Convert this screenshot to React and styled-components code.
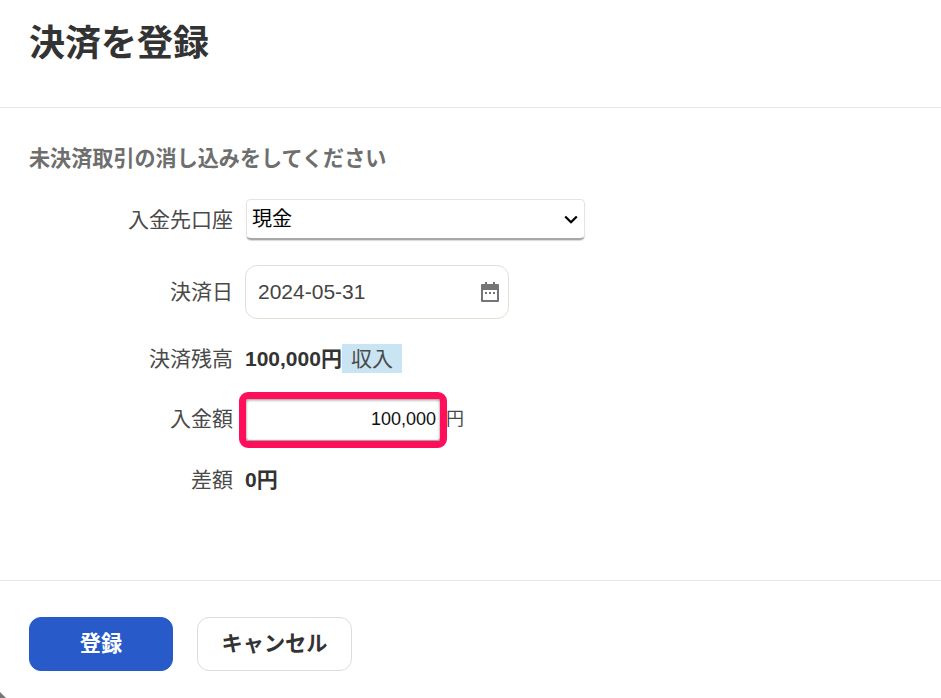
import React from 'react';
import styled, { createGlobalStyle } from 'styled-components';

const GlobalStyle = createGlobalStyle`
  html, body {
    margin: 0;
    padding: 0;
    background: #fff;
  }
  body {
    font-family: "Liberation Sans", Arial, "Noto Sans CJK JP", sans-serif;
    color: #333;
  }
`;

const Modal = styled.div`
  position: relative;
  width: 941px;
  height: 698px;
  background: #fff;
  overflow: hidden;
`;

const Header = styled.header`
  height: 108px;
  box-sizing: border-box;
  border-bottom: 1px solid #e6e6e6;
  padding: 21px 29px 0;
`;

const Title = styled.h1`
  margin: 0;
  font-size: 36px;
  line-height: 46px;
  font-weight: 700;
  color: #333;
`;

const Body = styled.div`
  height: 472px;
  box-sizing: border-box;
  padding: 39px 29px 0;
`;

const Lead = styled.p`
  margin: 0 0 28px;
  font-size: 21.1px;
  line-height: 24px;
  font-weight: 700;
  color: #6e6e6e;
`;

const Form = styled.div`
  display: flex;
  flex-direction: column;
`;

const Row = styled.div`
  display: flex;
  align-items: center;
  height: ${props => props.$height}px;
  margin-bottom: ${props => props.$gap}px;
`;

const Label = styled.label`
  width: 204px;
  flex: none;
  margin-right: 12px;
  padding-bottom: ${props => props.$lift || 4}px;
  text-align: right;
  font-size: 21px;
  color: #4a4a4a;
`;

const SelectBox = styled.div`
  width: 339px;
  height: 41px;
  margin-left: 1px;
  box-sizing: border-box;
  display: flex;
  align-items: center;
  justify-content: space-between;
  padding: 0 6px 0 5px;
  background: #fff;
  border: 1px solid #e4e4e4;
  border-bottom: 2px solid #a8a8a8;
  border-radius: 5px;
  box-shadow: 0 1px 1px rgba(0, 0, 0, 0.15);
  font-size: 20px;
  color: #000;
`;

const SelectValue = styled.span`
  padding-bottom: 4px;
`;

const DateBox = styled.div`
  width: 264px;
  height: 54px;
  box-sizing: border-box;
  display: flex;
  align-items: center;
  justify-content: space-between;
  padding: 0 8px 0 12px;
  border: 1px solid #e3dfd5;
  border-radius: 12px;
  font-size: 21px;
  color: #444;
`;

const Amount = styled.strong`
  padding-bottom: 4px;
  font-size: 21px;
  font-weight: 700;
  color: #333;
`;

const Tag = styled.span`
  display: inline-block;
  width: 60px;
  height: 29px;
  box-sizing: border-box;
  padding-left: 9px;
  background: #c9e4f2;
  font-size: 21px;
  line-height: 29px;
  color: #4a4a4a;
`;

const Highlight = styled.div`
  width: 208px;
  height: 56px;
  margin-left: -6px;
  box-sizing: border-box;
  border: 7px solid #ff0f5b;
  border-radius: 9px;
  background: #fff;
`;

const AmountInput = styled.div`
  height: 100%;
  box-sizing: border-box;
  padding-right: 4px;
  border-radius: 3px;
  box-shadow: inset 0 1px 3px rgba(0, 0, 0, 0.45), inset 0 -1px 1px rgba(0, 0, 0, 0.35);
  text-align: right;
  font-size: 18px;
  line-height: 40px;
  color: #111;
`;

const Unit = styled.span`
  margin-left: -1px;
  padding-bottom: 6px;
  font-size: 18px;
  color: #4a4a4a;
`;

const Footer = styled.footer`
  display: flex;
  gap: 24px;
  border-top: 1px solid #e6e6e6;
  padding: 36px 29px 0;
`;

const Button = styled.button`
  width: ${props => (props.$primary ? 144 : 155)}px;
  height: 54px;
  box-sizing: border-box;
  padding: 0 0 5px;
  border: 1px solid ${props => (props.$primary ? '#285bc9' : '#dcdcdc')};
  border-radius: 12px;
  background: ${props => (props.$primary ? '#285bc9' : '#fff')};
  color: ${props => (props.$primary ? '#fff' : '#333')};
  font-family: inherit;
  font-size: 21.2px;
  font-weight: 700;
`;

const Corner = styled.svg`
  position: absolute;
  left: 0;
  bottom: 0;
`;

function CalendarIcon() {
  return (
    <svg width="20" height="22" viewBox="0 0 20 22">
      <path fill="#757575" d="M2 3h3V1h2v2h6V1h2v2h3a1 1 0 0 1 1 1v16a1 1 0 0 1-1 1H2a1 1 0 0 1-1-1V4a1 1 0 0 1 1-1zm1 6v10h14V9H3z" />
      <rect x="5" y="11" width="2" height="2" fill="#757575" />
      <rect x="9" y="11" width="2" height="2" fill="#757575" />
      <rect x="13" y="11" width="2" height="2" fill="#757575" />
    </svg>
  );
}

function Chevron() {
  return (
    <svg width="14" height="9" viewBox="0 0 14 9">
      <path d="M1.2 1.5 7 7.2l5.8-5.7" fill="none" stroke="#000" strokeWidth="2.3" />
    </svg>
  );
}

export default function App() {
  return (
    <Modal>
      <GlobalStyle />
      <Header>
        <Title>決済を登録</Title>
      </Header>
      <Body>
        <Lead>未決済取引の消し込みをしてください</Lead>
        <Form>
          <Row $height={41} $gap={25}>
            <Label>入金先口座</Label>
            <SelectBox><SelectValue>現金</SelectValue><Chevron /></SelectBox>
          </Row>
          <Row $height={54} $gap={25}>
            <Label>決済日</Label>
            <DateBox>2024-05-31<CalendarIcon /></DateBox>
          </Row>
          <Row $height={29} $gap={19}>
            <Label>決済残高</Label>
            <Amount>100,000円</Amount>
            <Tag>収入</Tag>
          </Row>
          <Row $height={56} $gap={18}>
            <Label $lift={6}>入金額</Label>
            <Highlight><AmountInput>100,000</AmountInput></Highlight>
            <Unit>円</Unit>
          </Row>
          <Row $height={28} $gap={0}>
            <Label>差額</Label>
            <Amount>0円</Amount>
          </Row>
        </Form>
      </Body>
      <Footer>
        <Button $primary>登録</Button>
        <Button>キャンセル</Button>
      </Footer>
      <Corner width="6" height="6" viewBox="0 0 6 6">
        <path d="M0 0 6 6H0z" fill="#777" />
      </Corner>
    </Modal>
  );
}
